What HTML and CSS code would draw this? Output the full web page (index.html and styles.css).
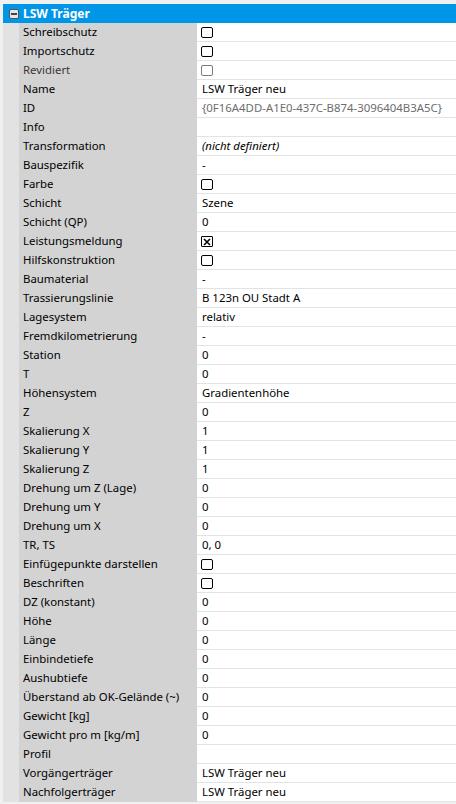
FILE: index.html
```html
<!DOCTYPE html>
<html>
<head>
    <title>Eigenschaften</title>
    <link rel="stylesheet" href="styles.css">
</head>
<body>
    <!-- Property grid: one category with its rows -->
    <div class="grid">
        <div class="category">
            <span class="toggle"><span class="dash"></span></span>
            <span class="category-name">LSW Träger</span>
        </div>
        <div class="rows">
            <div class="row"><div class="label">Schreibschutz</div><div class="value"><span class="check"></span></div></div>
            <div class="row"><div class="label">Importschutz</div><div class="value"><span class="check"></span></div></div>
            <div class="row"><div class="label disabled">Revidiert</div><div class="value"><span class="check off"></span></div></div>
            <div class="row"><div class="label">Name</div><div class="value">LSW Träger neu</div></div>
            <div class="row"><div class="label">ID</div><div class="value readonly">{0F16A4DD-A1E0-437C-B874-3096404B3A5C}</div></div>
            <div class="row"><div class="label">Info</div><div class="value"></div></div>
            <div class="row"><div class="label">Transformation</div><div class="value undefined">(nicht definiert)</div></div>
            <div class="row"><div class="label">Bauspezifik</div><div class="value">-</div></div>
            <div class="row"><div class="label">Farbe</div><div class="value"><span class="check"></span></div></div>
            <div class="row"><div class="label">Schicht</div><div class="value">Szene</div></div>
            <div class="row"><div class="label">Schicht (QP)</div><div class="value">0</div></div>
            <div class="row"><div class="label">Leistungsmeldung</div><div class="value"><span class="check checked"><svg width="12" height="12" viewBox="0 0 12 12"><path d="M3 3 L9 9 M9 3 L3 9" stroke="#000" stroke-width="1.6"/></svg></span></div></div>
            <div class="row"><div class="label">Hilfskonstruktion</div><div class="value"><span class="check"></span></div></div>
            <div class="row"><div class="label">Baumaterial</div><div class="value">-</div></div>
            <div class="row"><div class="label">Trassierungslinie</div><div class="value">B 123n OU Stadt A</div></div>
            <div class="row"><div class="label">Lagesystem</div><div class="value">relativ</div></div>
            <div class="row"><div class="label">Fremdkilometrierung</div><div class="value">-</div></div>
            <div class="row"><div class="label">Station</div><div class="value">0</div></div>
            <div class="row"><div class="label">T</div><div class="value">0</div></div>
            <div class="row"><div class="label">Höhensystem</div><div class="value">Gradientenhöhe</div></div>
            <div class="row"><div class="label">Z</div><div class="value">0</div></div>
            <div class="row"><div class="label">Skalierung X</div><div class="value">1</div></div>
            <div class="row"><div class="label">Skalierung Y</div><div class="value">1</div></div>
            <div class="row"><div class="label">Skalierung Z</div><div class="value">1</div></div>
            <div class="row"><div class="label">Drehung um Z (Lage)</div><div class="value">0</div></div>
            <div class="row"><div class="label">Drehung um Y</div><div class="value">0</div></div>
            <div class="row"><div class="label">Drehung um X</div><div class="value">0</div></div>
            <div class="row"><div class="label">TR, TS</div><div class="value">0, 0</div></div>
            <div class="row"><div class="label">Einfügepunkte darstellen</div><div class="value"><span class="check"></span></div></div>
            <div class="row"><div class="label">Beschriften</div><div class="value"><span class="check"></span></div></div>
            <div class="row"><div class="label">DZ (konstant)</div><div class="value">0</div></div>
            <div class="row"><div class="label">Höhe</div><div class="value">0</div></div>
            <div class="row"><div class="label">Länge</div><div class="value">0</div></div>
            <div class="row"><div class="label">Einbindetiefe</div><div class="value">0</div></div>
            <div class="row"><div class="label">Aushubtiefe</div><div class="value">0</div></div>
            <div class="row"><div class="label">Überstand ab OK-Gelände (~)</div><div class="value">0</div></div>
            <div class="row"><div class="label">Gewicht [kg]</div><div class="value">0</div></div>
            <div class="row"><div class="label">Gewicht pro m [kg/m]</div><div class="value">0</div></div>
            <div class="row"><div class="label">Profil</div><div class="value"></div></div>
            <div class="row"><div class="label">Vorgängerträger</div><div class="value">LSW Träger neu</div></div>
            <div class="row"><div class="label">Nachfolgerträger</div><div class="value">LSW Träger neu</div></div>
        </div>
    </div>
</body>
</html>
```

FILE: styles.css
```css
/* Page */
* {
  margin: 0;
  padding: 0;
  box-sizing: border-box;
}

body {
  font-family: "Noto Sans", "Open Sans", sans-serif;
  font-size: 11.4px;
  color: #000;
  background: #f0f0f0;
}

/* Grid frame: light strip on the left, rows on the right */
.grid {
  margin: 4px 0 0 3px;
}

/* Category header */
.category {
  display: flex;
  align-items: center;
  height: 19px;
  background: #0096e8;
  color: #fff;
  font-weight: bold;
  font-size: 12px;
}

.toggle {
  display: flex;
  align-items: center;
  justify-content: center;
  width: 10px;
  height: 10px;
  margin: 0 4px 0 6px;
  border: 1px solid #555;
  border-radius: 2px;
  background: #e6e6e6;
}

.dash {
  width: 6px;
  height: 2px;
  background: #444;
}

.rows {
  padding-left: 16px;
  background: #e2e2e2;
}

/* One property row */
.row {
  display: flex;
  height: 19px;
}

.label {
  width: 178px;
  padding-left: 4px;
  line-height: 18px;
  background: #d3d3d3;
  white-space: nowrap;
  overflow: hidden;
}

.label.disabled {
  color: #3f3434;
}

.value {
  flex: 1;
  padding-left: 5px;
  line-height: 18px;
  background: #fff;
  border-bottom: 1px solid #e3e3e3;
  white-space: nowrap;
  display: flex;
  align-items: center;
}

.value.readonly {
  color: #6d6d6d;
}

.value.undefined {
  font-style: italic;
}

/* Checkboxes */
.check {
  display: inline-block;
  width: 12px;
  height: 11px;
  margin-left: -1px;
  border: 1px solid #000;
  border-radius: 2px;
  background: #fff;
  position: relative;
}

.check.off {
  border-color: #7a7a7a;
}

.check.checked {
  border-radius: 1px;
}

.check svg {
  position: absolute;
  left: -1px;
  top: -1px;
}
```
